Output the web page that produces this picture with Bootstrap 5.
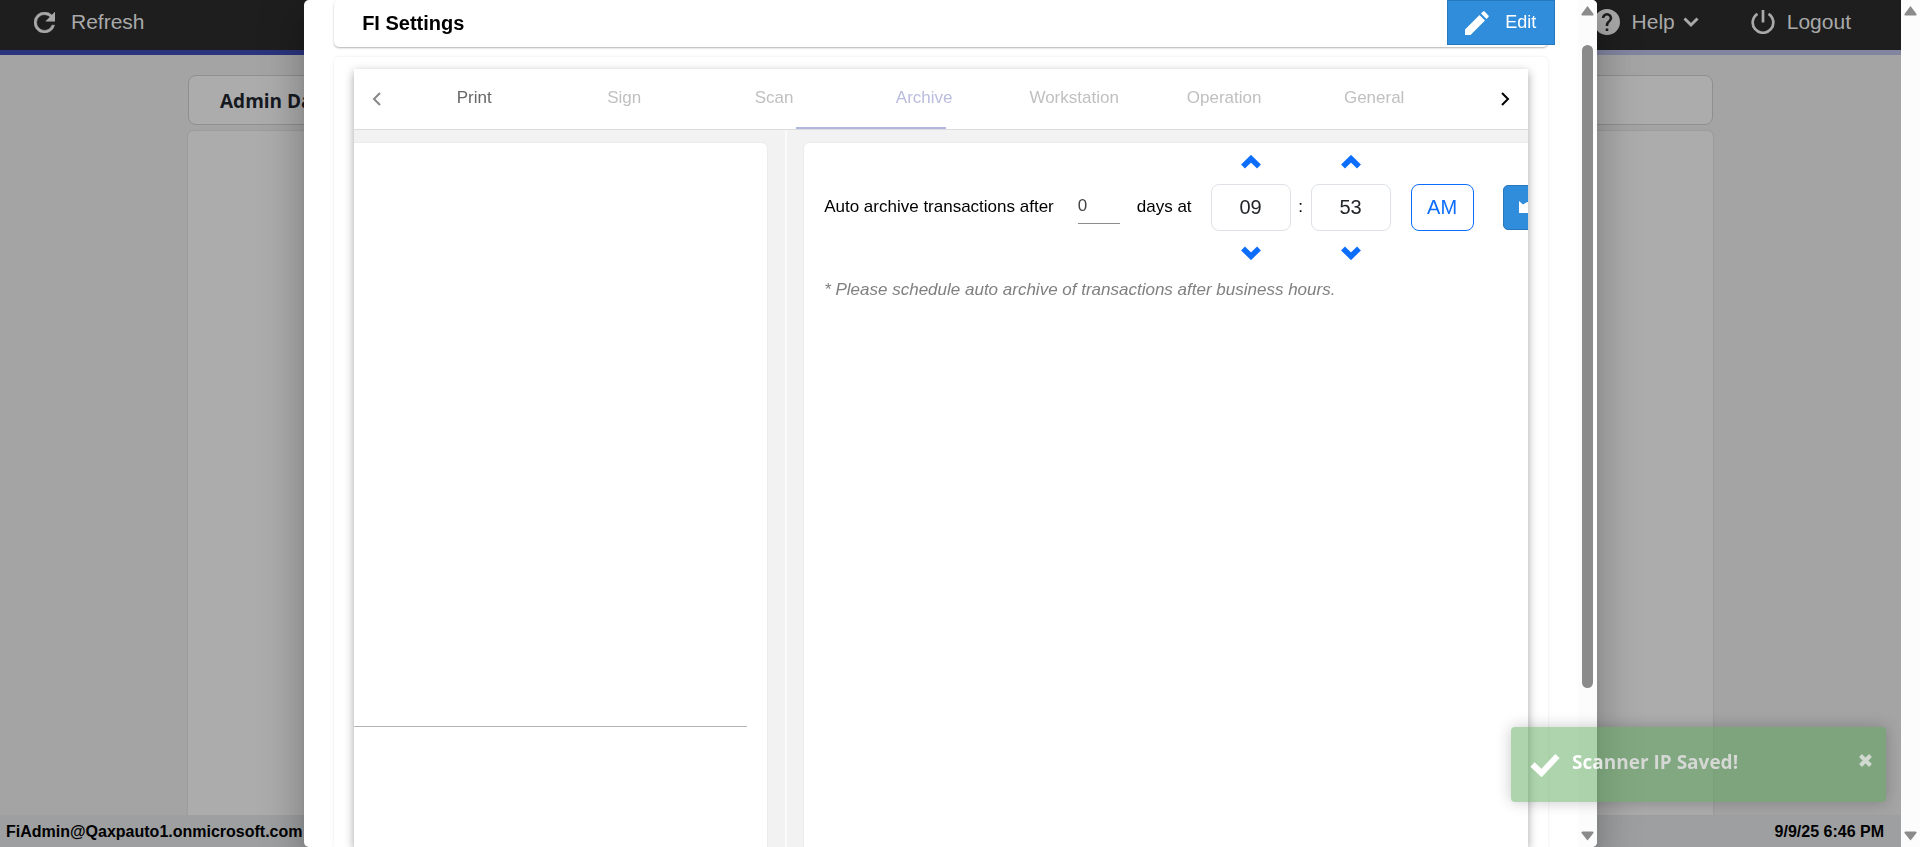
<!DOCTYPE html>
<html lang="en">
<head>
<meta charset="utf-8">
<meta name="viewport" content="width=device-width, initial-scale=1">
<title>FI Settings</title>
<link rel="stylesheet" href="https://cdn.jsdelivr.net/npm/bootstrap@5.3.0/dist/css/bootstrap.min.css">
<style>
  body { font-family: "Liberation Sans", Arial, sans-serif; font-size: 17px; background: #a4a4a4; overflow: hidden; color: #000; }
  svg { display: block; flex: none; }
  button { font-family: inherit; }

  /* page behind the dialog */
  .topbar { height: 55px; background: #1e1e1e; color: #a9a9a9; font-size: 21px; padding: 0 50px 0 34px;
    border-bottom: 5px solid; border-image: linear-gradient(90deg, #2b357e 20%, #8285a0 80%) 1; }
  .topbar a { color: inherit; height: 44px; }
  .page-wrap { width: 1525px; max-width: 82%; }
  .page-title { height: 50px; margin-top: 20px; padding: 2px 31px 0; border: 1px solid #8f8f8f; border-radius: 8px; background: #acacac; color: #16191f; font: bold 19px "Open Sans", sans-serif; }
  .page-body { margin-top: 6px; background: #acacac; border-radius: 5px 5px 0 0; box-shadow: 0 0 2px #888; }
  .statusbar { height: 32px; background: #9d9fa0; font-size: 16px; font-weight: bold; padding: 1px 17px 0 6px; z-index: 1; }

  /* scroll gutters */
  .gutter { width: 19px; flex: none; background: #fcfcfc; padding: 6px 0; }
  .thumb { width: 11px; height: 77%; margin-top: 29px; margin-bottom: auto; background: #8b8b8b; border-radius: 6px; }

  /* settings dialog */
  .sheet-layer { top: 0; right: 19px; bottom: 0; left: 0; z-index: 5; overflow: hidden; }
  .sheet { width: 68%; background: #fff; border-radius: 5px; overflow: hidden;
    box-shadow: 0 11px 15px -7px rgba(0,0,0,.2), 0 24px 38px 3px rgba(0,0,0,.14), 0 9px 46px 8px rgba(0,0,0,.12); }
  .sheet-main { padding: 0 30px; min-width: 0; }
  .sheet-head { height: 47px; padding-left: 28px; border-radius: 5px; box-shadow: 0 1px 2px rgba(0,0,0,.3); flex: none; }
  .sheet-head h1 { font-size: 20px; font-weight: bold; line-height: 46px; }
  .btn-edit { width: 108px; height: 45px; margin-right: -7px; border-radius: 0; background: #308ddb; border: 1px solid #2878bd; color: #fff; font-size: 18px; padding: 0; }
  .sheet-body { margin-top: 10px; padding: 12px 20px 0; border-radius: 5px 5px 0 0; box-shadow: 0 0 3px rgba(0,0,0,.1); }
  .tab-panel { background: #f2f2f2; box-shadow: 0 3px 9px rgba(0,0,0,.36); }

  .tab-strip { height: 61px; background: #fff; border-bottom: 1px solid #dcdcdc; flex: none; }
  .tab-arrow { width: 45px; flex: none; background: none; border: 0; padding: 0 0 0 18px; }
  .tab-strip .nav-link { flex: 0 0 150px; height: 60px; padding: 0; font-size: 17px; color: #c0c0c0; line-height: 58px; border: 0; }
  .tab-strip .nav-link.first-tab { color: #666; }
  .tab-strip .nav-link.current-tab { color: #b9bcdc; }
  .tab-strip .ink { width: 150px; height: 2px; background: #b0b8df; bottom: 0; left: 397px; }
  .tab-area { overflow: hidden; }

  .pane-left { width: 413px; margin-top: 13px; background: #fff; border-radius: 0 5px 0 0; flex: none; box-shadow: 0 0 2px rgba(0,0,0,.1); }
  .pane-left hr { margin: 583px 20px 0 0; border-color: #999; opacity: .75; }
  .pane-divider { width: 2px; background: #fafafa; margin: 0 17px 0 18px; flex: none; }
  .pane-right { margin-top: 13px; background: #fff; border-radius: 5px 0 0 0; padding: 0 0 0 20px; min-width: 0; box-shadow: 0 0 2px rgba(0,0,0,.1); }
  .schedule { white-space: nowrap; height: 128px; }
  .days { width: 42px; height: 34px; border: 0; border-bottom: 1px solid #8c8c8c; border-radius: 0; padding: 0 0 2px; margin: 0 17px 0 24px; color: #444; background: transparent; }
  .days-at { margin-right: 19px; }
  .spin { width: 80px; flex: none; }
  .spin button { height: 36px; background: none; border: 0; padding: 0; color: #0d6efd; }
  .spin input { width: 80px; height: 47px; border: 1px solid #dee2e6; border-radius: 8px; text-align: center; font-size: 20px; color: #212529; padding: 0; margin: 4px 0; }
  .colon { width: 20px; flex: none; }
  .btn-ampm { width: 63px; height: 47px; border-radius: 8px; font-size: 20px; padding: 0; color: #0d6efd; border: 1px solid #0d6efd; margin-left: 20px; flex: none; }
  .btn-save { width: 80px; height: 45px; border-radius: 5px; background: #308ddb; border: 1px solid #2878bd; padding: 0 0 0 15px; margin-left: 29px; flex: none; }
  .note { color: #808080; font-style: italic; margin: 8px 0 0; line-height: 22px; }

  /* toast */
  .toast-box { right: 34px; bottom: 45px; width: 375px; height: 75px; z-index: 9; border-radius: 4px; background: rgba(81,163,81,.47); box-shadow: 0 0 15px rgba(0,0,0,.22); font: bold 19px "Open Sans", sans-serif; padding: 0 14px 0 19px; }
  .toast-box span { background: linear-gradient(90deg, #fff 12%, #d5d8d5 20%); -webkit-background-clip: text; color: transparent; margin: 0 auto 6px 12px; }
  .toast-box button { background: none; border: 0; padding: 0; margin-bottom: 8px; }
</style>
</head>
<body>
<div class="vh-100 d-flex">
  <div class="flex-grow-1 d-flex flex-column">
    <nav class="topbar d-flex justify-content-between">
      <a href="#" class="d-flex align-items-center text-decoration-none gap-3">
        <svg width="21" height="21" viewBox="4 4 16 16"><path d="M17.650 6.350A7.960 7.960 0 0 0 12 4a8 8 0 1 0 7.730 10h-2.080A6 6 0 1 1 12 6c1.660 0 3.140.690 4.220 1.780L13 11h7V4z" fill="currentColor" stroke="currentColor" stroke-width=".4"/></svg>
        Refresh
      </a>
      <div class="d-flex gap-5">
        <a href="#" class="d-flex align-items-center text-decoration-none">
          <svg width="26" height="26" viewBox="2 2 20 20" class="me-2"><path d="M12 2a10 10 0 1 0 0 20 10 10 0 0 0 0-20zm1 17h-2v-2h2zm2.070-7.750l-.9.920C13.450 12.900 13 13.500 13 15h-2v-.5c0-1.100.450-2.100 1.170-2.830l1.240-1.260A2 2 0 1 0 10 9H8a4 4 0 1 1 8 0c0 .880-.360 1.680-.930 2.250z" fill="currentColor"/></svg>
          <span class="ms-1">Help</span>
          <svg width="16" height="11" viewBox="0 0 16 11" class="ms-2 me-1"><path d="M1.500 1.500L8 8l6.500-6.500" fill="none" stroke="currentColor" stroke-width="3"/></svg>
        </a>
        <a href="#" class="d-flex align-items-center text-decoration-none">
          <svg width="24" height="24" viewBox="0 0 24 24" class="me-2"><path d="M6.500 3.800a10.300 10.300 0 1 0 11 0" fill="none" stroke="currentColor" stroke-width="2.700"/><path d="M12 0v12.500" stroke="currentColor" stroke-width="2.700"/></svg>
          <span class="ms-1">Logout</span>
        </a>
      </div>
    </nav>
    <main class="page-wrap mx-auto flex-grow-1 d-flex flex-column">
      <h2 class="page-title d-flex align-items-center mb-0">Admin Dashboard</h2>
      <div class="page-body flex-grow-1"></div>
    </main>
    <footer class="statusbar d-flex justify-content-between align-items-center">
      <span>FiAdmin@Qaxpauto1.onmicrosoft.com</span><span>9/9/25 6:46 PM</span>
    </footer>
  </div>
  <div class="gutter d-flex flex-column align-items-center justify-content-between">
    <svg width="13" height="10"><path d="M6.500 0L12.500 8q.5 1.500-1 1.500h-10q-1.500 0-1-1.500z" fill="#8b8b8b"/></svg>
    <svg width="13" height="10"><path d="M6.500 9.500L12.500 2q.5-1.500-1-1.500h-10q-1.500 0-1 1.500z" fill="#8b8b8b"/></svg>
  </div>
</div>

<div class="sheet-layer position-fixed d-flex justify-content-center">
  <section class="sheet d-flex" role="dialog" aria-labelledby="sheetTitle">
    <div class="sheet-main flex-grow-1 d-flex flex-column">
      <header class="sheet-head d-flex justify-content-between">
        <h1 id="sheetTitle" class="mb-0">FI Settings</h1>
        <button type="button" class="btn-edit d-flex align-items-center justify-content-center gap-3">
          <svg width="24" height="24" viewBox="0 0 24 24"><path d="M0 24v-5.500L14.500 4l5.500 5.500L5.500 24zM16 2.500L18 .6q.8-.8 1.600 0l3.800 3.800q.8.800 0 1.600L21.500 8z" fill="#fff"/></svg>
          Edit
        </button>
      </header>
      <div class="sheet-body flex-grow-1 d-flex flex-column">
        <div class="tab-panel flex-grow-1 d-flex flex-column">
          <div class="tab-strip d-flex align-items-stretch">
            <button type="button" class="tab-arrow" aria-label="Previous tabs"><svg width="9" height="14" viewBox="0 0 9 14"><path d="M8 1L2 7l6 6" fill="none" stroke="#888" stroke-width="2"/></svg></button>
            <nav class="nav flex-nowrap flex-grow-1 position-relative tab-area">
              <a href="#" class="nav-link text-center first-tab">Print</a>
              <a href="#" class="nav-link text-center">Sign</a>
              <a href="#" class="nav-link text-center">Scan</a>
              <a href="#" class="nav-link text-center current-tab">Archive</a>
              <a href="#" class="nav-link text-center">Workstation</a>
              <a href="#" class="nav-link text-center">Operation</a>
              <a href="#" class="nav-link text-center">General</a>
              <span class="ink position-absolute"></span>
            </nav>
            <button type="button" class="tab-arrow" aria-label="Next tabs"><svg width="9" height="14" viewBox="0 0 9 14"><path d="M1 1l6 6-6 6" fill="none" stroke="#000" stroke-width="2"/></svg></button>
          </div>
          <div class="d-flex flex-grow-1 tab-area">
            <div class="pane-left"><hr></div>
            <div class="pane-divider"></div>
            <div class="pane-right flex-grow-1">
              <form class="schedule d-flex align-items-center">
                <label for="days">Auto archive transactions after</label>
                <input id="days" class="days" type="text" value="0">
                <span class="days-at">days at</span>
                <div class="spin d-flex flex-column">
                  <button type="button" aria-label="Hour up"><svg class="mx-auto" width="20" height="14" viewBox="0 0 20 14"><path d="M2 11.500L10 3.700l8 7.800" fill="none" stroke="currentColor" stroke-width="5.500"/></svg></button>
                  <input type="text" value="09" aria-label="Hour">
                  <button type="button" aria-label="Hour down"><svg class="mx-auto" width="20" height="14" viewBox="0 0 20 14"><path d="M2 2.500l8 7.800 8-7.800" fill="none" stroke="currentColor" stroke-width="5.500"/></svg></button>
                </div>
                <span class="colon text-center">:</span>
                <div class="spin d-flex flex-column">
                  <button type="button" aria-label="Minute up"><svg class="mx-auto" width="20" height="14" viewBox="0 0 20 14"><path d="M2 11.500L10 3.700l8 7.800" fill="none" stroke="currentColor" stroke-width="5.500"/></svg></button>
                  <input type="text" value="53" aria-label="Minute">
                  <button type="button" aria-label="Minute down"><svg class="mx-auto" width="20" height="14" viewBox="0 0 20 14"><path d="M2 2.500l8 7.800 8-7.800" fill="none" stroke="currentColor" stroke-width="5.500"/></svg></button>
                </div>
                <button type="button" class="btn btn-ampm">AM</button>
                <button type="button" class="btn-save" aria-label="Save"><svg width="20" height="12" viewBox="0 0 20 12"><path d="M0 0l4 3.500L8 1h6v11H0z" fill="#fff"/></svg></button>
              </form>
              <p class="note">* Please schedule auto archive of transactions after business hours.</p>
            </div>
          </div>
        </div>
      </div>
    </div>
    <div class="gutter d-flex flex-column align-items-center justify-content-between">
      <svg width="13" height="10"><path d="M6.500 0L12.500 8q.5 1.500-1 1.500h-10q-1.500 0-1-1.500z" fill="#8b8b8b"/></svg>
      <div class="thumb"></div>
      <svg width="13" height="10"><path d="M6.500 9.500L12.500 2q.5-1.500-1-1.500h-10q-1.500 0-1 1.500z" fill="#8b8b8b"/></svg>
    </div>
  </section>
</div>

<div class="toast-box position-fixed d-flex align-items-center" role="alert">
  <svg width="30" height="24" viewBox="0 0 30 24"><path d="M2.500 11.500l9 8.500L27.500 3" fill="none" stroke="#fff" stroke-width="6"/></svg>
  <span>Scanner IP Saved!</span>
  <button type="button" aria-label="Close"><svg width="13" height="13" viewBox="0 0 13 13"><path d="M1.500 1.500l10 10m0-10l-10 10" stroke="#d0d8d0" stroke-width="4"/></svg></button>
</div>
<script src="https://cdn.jsdelivr.net/npm/bootstrap@5.3.0/dist/js/bootstrap.bundle.min.js"></script>
</body>
</html>
